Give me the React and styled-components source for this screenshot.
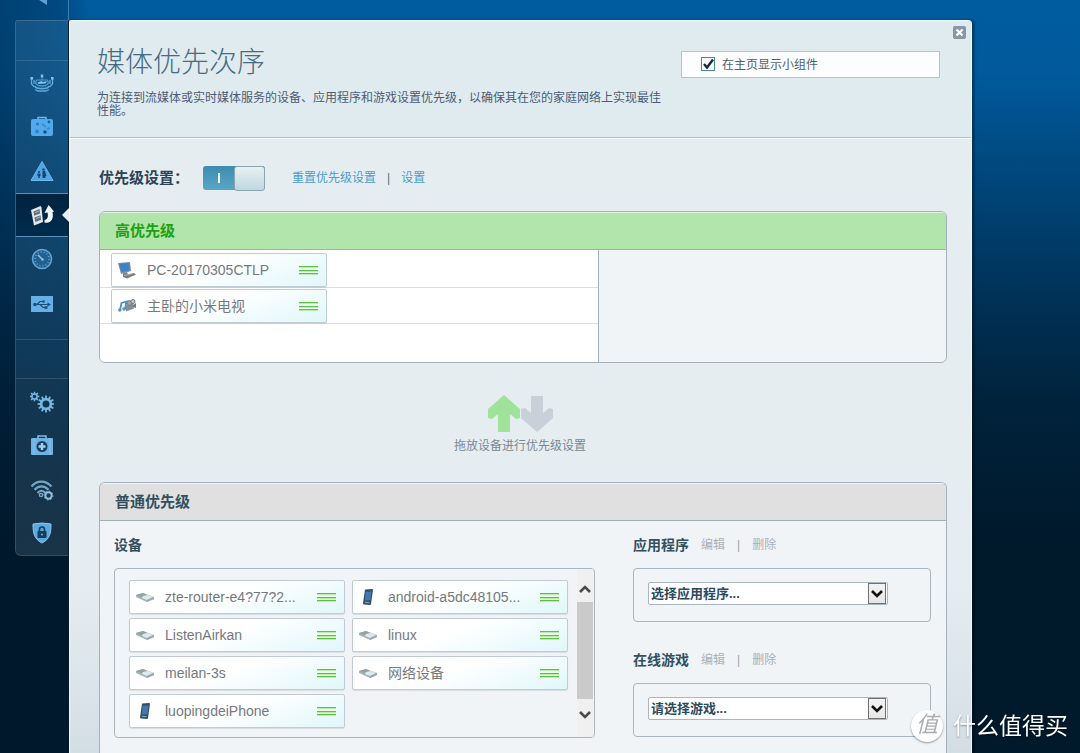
import React, { useState } from 'react';
import styled, { createGlobalStyle } from 'styled-components';

const GlobalStyle = createGlobalStyle`
    * {
        box-sizing: border-box;
    }

    body {
        margin: 0;
        background-color: #001a2c;
        color: #3f5566;
        font-family: "Liberation Sans", "Noto Sans CJK SC", sans-serif;
        font-size: 12px;
    }

    button, input, select {
        font-family: inherit;
    }
`;

const Page = styled.div`
    display: flex;
    min-height: 100vh;
    background: linear-gradient(to right, #00182e66 0, #00182e44 60px, transparent 90px),
        linear-gradient(#005c9f 0, #005a9c 70px, #00467a 180px, #003156 300px, #00233c 400px, #00192b 540px);
`;

const Rail = styled.nav`
    flex: 0 0 54px;
    margin-left: 15px;

    .rail_top {
        height: 20px;
        padding-left: 24px;
        border-right: 1px solid #3c7dae;
    }

    .rail_top svg {
        display: block;
    }
`;

const RailMenu = styled.div`
    border: 1px solid #ffffff22;
    border-right: 1px solid #001b31;
    border-radius: 3px 0 0 6px;
    background: linear-gradient(#4a86ad40, #3b7ba640 60%, #6b8ea03a);
`;

const RailSpace = styled.div`
    height: 40px;
    border-bottom: 1px solid #ffffff22;
    border-top: ${({ $line }) => ($line ? '1px solid #ffffff22' : 'none')};
    margin-top: ${({ $line }) => ($line ? '14px' : '0')};
`;

const RailButton = styled.button`
    display: flex;
    align-items: center;
    justify-content: center;
    position: relative;
    width: 100%;
    height: 44px;
    padding: 0;
    border: 0;
    border-top: 1px solid ${({ $active }) => ($active ? '#5e8fb2' : 'transparent')};
    border-bottom: 1px solid ${({ $active }) => ($active ? '#5e8fb2' : 'transparent')};
    background: ${({ $active }) => ($active ? 'linear-gradient(#00233f, #002c4c)' : 'none')};
    cursor: pointer;

    .pointer {
        position: absolute;
        right: -1px;
        top: 14px;
    }
`;

const Panel = styled.main`
    flex: 1;
    display: flex;
    flex-direction: column;
    margin: 20px 10% 0 0;
    border: 1px solid #eefafc;
    border-bottom: 0;
    border-radius: 2px 4px 0 0;
    background: linear-gradient(#e6edf1 0, #e6edf2 560px, #d3dee4 733px);
    box-shadow: 2px 0 3px #00000066;
`;

const Header = styled.header`
    position: relative;
    display: flex;
    justify-content: space-between;
    min-height: 117px;
    padding: 21px 31px 0 27px;
    border-bottom: 1px solid #b3c3cc;
    box-shadow: 0 1px #f8fbfc;
    background-color: #e0ebf0;

    h1 {
        margin: 0;
        color: #466b83;
        font-size: 28px;
        font-weight: 300;
        line-height: 42px;
    }

    p {
        max-width: 570px;
        margin: 8px 0 0;
        color: #4c5b76;
        line-height: 13px;
    }
`;

const CloseButton = styled.button`
    position: absolute;
    top: 5px;
    right: 5px;
    width: 13px;
    height: 13px;
    padding: 0;
    border: 0;
    background: none;
    cursor: pointer;

    svg {
        display: block;
    }
`;

const WidgetOption = styled.label`
    flex: 0 0 259px;
    display: flex;
    align-items: center;
    gap: 7px;
    height: 27px;
    margin-top: 9px;
    padding: 0 0 2px 19px;
    border: 1px solid #b6c3ce;
    background-color: #fbfdfe;
    color: #4f6070;
`;

const CheckBox = styled.span`
    display: grid;

    input, svg {
        grid-area: 1 / 1;
    }

    input {
        appearance: none;
        width: 14px;
        height: 14px;
        margin: 0;
        border: 1px solid #4b87a3;
        background-color: #fff;
    }

    svg {
        z-index: 1;
        pointer-events: none;
        visibility: hidden;
    }

    input:checked + svg {
        visibility: visible;
    }
`;

const Content = styled.div`
    flex: 1;
    display: flex;
    flex-direction: column;
    padding: 0 24px 0 29px;
`;

const SettingsBar = styled.div`
    display: flex;
    align-items: center;
    height: 73px;
    padding-top: 7px;

    h2 {
        width: 104px;
        margin: 0;
        color: #2c4356;
        font-size: 15px;
        line-height: 20px;
        white-space: nowrap;
    }
`;

const Toggle = styled.button`
    display: flex;
    flex-direction: ${({ $on }) => ($on ? 'row' : 'row-reverse')};
    width: 62px;
    height: 24px;
    margin-right: 27px;
    padding: 0;
    border: 0;
    border-radius: 3px;
    background: linear-gradient(#3d8cb0, #5ba6c6);
    cursor: pointer;

    .mark {
        flex: 1;
        align-self: center;
        display: flex;
        justify-content: center;
    }

    .mark::after {
        content: "";
        width: 2px;
        height: 10px;
        background-color: #eef8fc;
    }

    .knob {
        width: 31px;
        height: 25px;
        border: 1px solid #8fa5ad;
        border-radius: 3px;
        background: linear-gradient(#e7f1f3, #bfd7df);
    }
`;

const Links = styled.div`
    display: flex;
    gap: ${({ $muted }) => ($muted ? '12px' : '11px')};
    color: ${({ $muted }) => ($muted ? '#9aa3ab' : '#5b6f80')};
    line-height: 16px;

    a {
        color: ${({ $muted }) => ($muted ? '#a9b0b6' : '#4c9bcb')};
        text-decoration: none;
    }
`;

const Group = styled.section`
    border: 1px solid #a3b1bc;
    border-radius: 6px;
    background-color: #f0f4f7;
    overflow: hidden;

    ${({ $open }) => $open && `
        flex: 1;
        border-bottom: 0;
        border-radius: 6px 6px 0 0;
    `}
`;

const GroupTitle = styled.h2`
    height: 38px;
    margin: 0;
    padding-left: 15px;
    border-bottom: 1px solid #a3b0b3;
    box-shadow: inset 0 1px #ffffff99;
    background-color: ${({ $high }) => ($high ? '#b1e5ab' : '#e0e0e0')};
    color: ${({ $high }) => ($high ? '#21a011' : '#33505f')};
    font-size: 15px;
    line-height: 37px;
`;

const HighList = styled.ul`
    width: 59%;
    min-height: 112px;
    margin: 0;
    padding: 2px 0 0;
    border-right: 1px solid #a3b1bc;
    background-color: #fff;
    list-style: none;

    li {
        display: flex;
        align-items: center;
        height: 36px;
        padding-left: 11px;
        border-bottom: 1px solid #dcdfe3;
    }
`;

const Card = styled.div`
    display: flex;
    align-items: center;
    width: 216px;
    height: 34px;
    padding: 0 8px 0 6px;
    border: 1px solid #c0cbd4;
    border-radius: 2px;
    background: linear-gradient(160deg, #fff 45%, #e0f7fb);
    box-shadow: 0 1px 1px #00000018;
    color: #75797d;
    cursor: move;

    .device_icon {
        flex: 0 0 18px;
    }

    .device_name {
        flex: 1;
        margin-left: 11px;
        overflow: hidden;
        font-size: 14px;
        line-height: 20px;
        white-space: nowrap;
    }

    .handle {
        flex: 0 0 19px;
    }
`;

const DragHint = styled.div`
    display: flex;
    flex-direction: column;
    align-items: center;
    gap: 5px;
    padding: 32px 0 26px;
    margin-right: 6px;
    color: #7b8790;
    line-height: 19px;

    svg {
        display: block;
    }
`;

const Columns = styled.div`
    display: flex;
    justify-content: space-between;
    padding: 13px 15px 14px 14px;

    .device_column {
        flex: 0 0 481px;
    }

    .service_column {
        flex: 0 0 298px;
    }
`;

const BlockTitle = styled.div`
    display: flex;
    align-items: center;
    gap: 12px;
    height: 22px;
    margin-bottom: 12px;

    h3 {
        margin: 0;
        color: #33505f;
        font-size: 14px;
        line-height: 22px;
    }
`;

const Frame = styled.div`
    border: 1px solid #a9b5bf;
    border-radius: 4px;
`;

const DeviceFrame = styled(Frame)`
    display: flex;
    height: 170px;

    .device_grid {
        flex: 1;
        display: grid;
        grid-template-columns: 216px 216px;
        align-content: start;
        gap: 4px 7px;
        padding: 11px 0 0 14px;
    }
`;

const ScrollBar = styled.div`
    display: flex;
    flex-direction: column;
    width: 16px;
    margin-right: 1px;
    padding: 7px 0 6px;
    background-color: #f0f0f0;

    button {
        flex: 1;
        padding: 0;
        border: 0;
        background: none;
    }

    button:first-child {
        flex: 0 0 26px;
    }

    .thumb {
        flex: 0 0 97px;
        background-color: #cacaca;
    }

    svg {
        display: block;
        margin: 0 auto;
    }
`;

const SelectFrame = styled(Frame)`
    height: 54px;
    margin-bottom: 27px;
    padding: 13px 14px;
`;

const SelectBox = styled.div`
    display: grid;
    width: 240px;

    select, .arrow {
        grid-area: 1 / 1;
    }

    select {
        appearance: none;
        width: 100%;
        height: 23px;
        padding: 0 24px 0 2px;
        border: 1px solid #a9b5bf;
        border-radius: 2px;
        background-color: #fff;
        color: #2c4a5e;
        font-size: 13px;
        font-weight: bold;
    }

    .arrow {
        display: flex;
        align-items: center;
        justify-content: center;
        align-self: center;
        justify-self: end;
        z-index: 1;
        width: 18px;
        height: 21px;
        margin-right: 2px;
        border: 1px solid #707070;
        background: linear-gradient(#f3f3f3, #e6e6e6);
        pointer-events: none;
    }
`;

const Watermark = styled.div`
    position: fixed;
    right: 12px;
    bottom: 9px;
    display: flex;
    align-items: center;
    gap: 10px;
    color: #fff;
    font-size: 23px;
    line-height: 36px;
    text-shadow: 0 1px 2px #00000066;

    .badge {
        width: 32px;
        height: 32px;
        border-radius: 50%;
        background-color: #fff;
        box-shadow: 0 1px 2px #00000066;
        color: #a9adb0;
        font-size: 22px;
        font-style: italic;
        line-height: 30px;
        text-align: center;
        text-shadow: none;
    }
`;

const toothPath = (cx, cy, outer, inner, teeth) => {
    const points = [];
    for (let i = 0; i < teeth; i++) {
        [[-0.3, inner], [-0.18, outer], [0.18, outer], [0.3, inner]].forEach(([shift, r]) => {
            const angle = ((i + shift) / teeth) * Math.PI * 2;
            points.push(`${(cx + r * Math.cos(angle)).toFixed(2)} ${(cy + r * Math.sin(angle)).toFixed(2)}`);
        });
    }
    return `M${points.join('L')}Z`;
};

const railIcons = {
    map: (
        <g fill="none" stroke="#5fa9dc" strokeWidth="1.3">
            <path d="M1.500 8v5l3 3M22.500 8v5l-3 3M4 9v4M20 9v4" />
            <path d="M5 15c1 3.500 13 3.500 14 0" strokeWidth="1.600" />
            <path d="M7.500 8.500C3.500 12 7 15 12 15s8.500-3 4.500-6.500" opacity=".8" />
            <path d="M12 6v3M8 9h8" opacity=".6" />
            <path d="M7.500 11.500l4-1.500 1.500 1 4-1-1.500 2.500-7 .5z" fill="#7cc3f0" stroke="none" />
            <path d="M5 18.500l3 1.500h8l3-1.500" />
            <rect x=".5" y="6" width="2.600" height="2.600" fill="#7cc3f0" stroke="none" />
            <rect x="21" y="6" width="2.600" height="2.600" fill="#7cc3f0" stroke="none" />
            <rect x="10.800" y="3.500" width="2.400" height="3" fill="#7cc3f0" stroke="none" />
        </g>
    ),
    guest: (
        <g>
            <path d="M8 4V2.500h8V4" fill="none" stroke="#66b8f2" strokeWidth="1.500" />
            <rect x="1" y="4" width="22" height="17" rx="2" fill="#51aaee" />
            <circle cx="7.500" cy="9" r="1.600" fill="#2b79bb" />
            <circle cx="7" cy="16.500" r="2" fill="#3384c5" />
            <circle cx="15" cy="17" r="1.700" fill="#174d7d" />
            <circle cx="19" cy="7" r="1.400" fill="#1f6299" />
            <path d="M12 9l4 3M17 14l3-1" stroke="#3a8dce" strokeWidth="2" />
        </g>
    ),
    parental: (
        <g>
            <path d="M12 2.500L23 21.500H1z" fill="#51a5e4" stroke="#6bb8ee" strokeWidth="1" strokeLinejoin="round" />
            <circle cx="9" cy="13" r="1" fill="#124672" />
            <path d="M7.500 14.500h3v2.500h-.7v2H8.200v-2h-.7z" fill="#124672" />
            <circle cx="13.500" cy="10.500" r="1.200" fill="#124672" />
            <path d="M12.500 12h2.500l1.500 5h-1v2h-3z" fill="#124672" />
        </g>
    ),
    media: (
        <g>
            <path d="M1 7l9.500-4 1 1.500L13 19l-9 3.500z" fill="#e3e7ea" />
            <path d="M3.500 8.500l6-2.500.6 4.500-6 2.300zM4.500 14.500l6-2.300.6 4.500-5.800 2.300z" fill="#60717e" />
            <path d="M5 9.500l4-1.500M6 15.500l4-1.500" stroke="#a7b4bd" />
            <path d="M14.500 19.500c6 1.500 9.500-3 8-10.500L24 8.500 18.500 2l-4 8 3-.5c1 4.500 0 7-3 7.500z" fill="#f2f5f7" />
        </g>
    ),
    speed: (
        <g fill="none" stroke="#65a5d1">
            <circle cx="12" cy="12" r="9.500" fill="#24608f" strokeWidth="1.500" />
            <circle cx="12" cy="12" r="7" strokeWidth="1.600" strokeDasharray="1 2.140" />
            <path d="M8 8l4 4" stroke="#8bc4e9" strokeWidth="1.600" />
            <circle cx="12.500" cy="12.500" r="1.300" fill="#8bc4e9" stroke="none" />
        </g>
    ),
    usb: (
        <g>
            <rect x="1" y="5" width="22" height="16" fill="#67b0e6" />
            <path d="M4 13.500h14M7 13.500l3-3h3M10 13.500l3 3h3" fill="none" stroke="#194f7a" strokeWidth="1.200" />
            <circle cx="5" cy="13.500" r="1.800" fill="#194f7a" />
            <circle cx="13.500" cy="10.500" r="1.300" fill="#194f7a" />
            <path d="M14.500 15.300h3v2.400h-3zM17.500 11.500l3.500 2-3.500 2z" fill="#194f7a" />
        </g>
    ),
    gears: (
        <g fill="#78b6e2" fillRule="evenodd">
            <path d={toothPath(16, 15, 8.5, 6.2, 12) + 'M19.500 15a3.500 3.500 0 1 0-7 0a3.500 3.500 0 1 0 7 0Z'} />
            <path d={toothPath(4.5, 7.5, 4.9, 3.4, 8) + 'M6.300 7.500a1.800 1.800 0 1 0-3.600 0a1.800 1.800 0 1 0 3.600 0Z'} />
        </g>
    ),
    kit: (
        <g>
            <path d="M8 5V3h8v2" fill="none" stroke="#82bfe9" strokeWidth="1.500" />
            <rect x="1" y="5" width="22" height="17" rx="1" fill="#6eb2e4" />
            <path d="M4 5v17M20 5v17" stroke="#8cc6ee" strokeWidth=".8" />
            <circle cx="12" cy="13.500" r="5.500" fill="#173f60" />
            <path d="M12 10v7M8.500 13.500h7" stroke="#9fd2f4" strokeWidth="2.400" />
        </g>
    ),
    wifi: (
        <g fill="none" stroke="#75a6c8" strokeWidth="2.200">
            <path d="M1.500 9.500c5.500-6.500 14-6.500 20 0" />
            <path d="M4.500 12.800c4-4.700 10-4.700 14 0" />
            <path d="M7.500 16c2.500-3 5.500-3 8 0" strokeWidth="2" />
            <circle cx="11" cy="18" r="1.600" strokeWidth="1.400" />
            <circle cx="18.500" cy="18.500" r="3.200" stroke="#94bfdb" strokeWidth="2" />
            <circle cx="18.500" cy="18.500" r="4.500" stroke="#94bfdb" strokeWidth="1" strokeDasharray="1.500 2" />
        </g>
    ),
    shield: (
        <g>
            <path d="M3 3q9-2 18 0c0 9-1 15-9 19C4 18 3 12 3 3z" fill="#5aa9df" stroke="#8fc8ef" strokeWidth="1" />
            <rect x="7.500" y="10" width="9" height="7" rx="1" fill="#163c5b" />
            <path d="M9.500 11V8.500a2.500 2.500 0 0 1 5 0V11" fill="none" stroke="#163c5b" strokeWidth="1.600" />
            <circle cx="12" cy="13.500" r="1" fill="#6fb7e8" />
        </g>
    ),
};

const deviceIcons = {
    pc: (
        <g>
            <path d="M0 2l12-1 1 9-10 3z" fill="#788d9f" />
            <path d="M1 3l10-1 1 7-8.500 2z" fill="#3d82c6" />
            <path d="M5 12.500l4-1.500 1 2.500 6-1.500 2 1.500-9 4-4-1.500z" fill="#777d80" />
            <path d="M6 14.500l9-2" stroke="#b2b8ba" />
        </g>
    ),
    media: (
        <g>
            <path d="M2 13l1.500-7 5-1.500L7 12" fill="none" stroke="#4c93c4" strokeWidth="1.800" />
            <circle cx="1.800" cy="13" r="1.700" fill="#4c93c4" />
            <circle cx="6" cy="12" r="1.700" fill="#4c93c4" />
            <path d="M8 8.500l7-2 1 5-8 3z" fill="#858d94" />
            <circle cx="11.500" cy="6" r="2.400" fill="#a0a6ab" stroke="#737b82" />
            <circle cx="15" cy="4.500" r="2" fill="#c2c7ca" stroke="#737b82" />
            <path d="M15 8l3-2v5l-3-1z" fill="#737b82" />
        </g>
    ),
    router: (
        <g>
            <path d="M0 7l7-2 11 4v2l-7 3L0 9z" fill="#a7b2b5" />
            <path d="M0 7l7-2 4 2-6 2z" fill="#94a2a5" />
            <path d="M7 8l5-1 5 2-6 3-5-2z" fill="#dceaec" />
            <path d="M11 12l7-3v2l-7 3z" fill="#9ba9ac" />
        </g>
    ),
    phone: (
        <g>
            <path d="M6 1.500l7-.5q1 0 1 1l-2 14q0 1-1 1l-6-.5q-1 0-1-1z" fill="#34516c" />
            <path d="M6.500 4l6-.5-1 8.500-5.500.5z" fill="#3f79ad" />
            <path d="M6 14.300l4.500.4" stroke="#8faabc" />
        </g>
    ),
};

const Chevron = ({ down, size = 14, color = '#4b4b4b' }) => (
    <svg width={size} height={size - 4} viewBox="0 0 14 10" fill="none" stroke={color} strokeWidth="2.600">
        <path d={down ? 'M2 2l5 5 5-5' : 'M2 8l5-5 5 5'} />
    </svg>
);

const RailItem = ({ icon, label, active }) => (
    <RailButton $active={active} aria-label={label}>
        <svg width="24" height="24" viewBox="0 0 24 24">{railIcons[icon]}</svg>
        {active && (
            <svg className="pointer" width="7" height="14" viewBox="0 0 7 14">
                <path d="M7 0v14L0 7z" fill="#e6eef2" />
            </svg>
        )}
    </RailButton>
);

const DeviceCard = ({ type, name }) => (
    <Card draggable>
        <svg className="device_icon" width="18" height="18" viewBox="0 0 18 18">{deviceIcons[type]}</svg>
        <span className="device_name">{name}</span>
        <svg className="handle" width="19" height="10" viewBox="0 0 19 10">
            <path d="M0 2.500h19M0 6.500h19M0 9.500h19" stroke="#b9efa4" strokeWidth="1" />
            <path d="M0 1.500h19M0 5.500h19M0 8.500h19" stroke="#62bd45" strokeWidth="1" />
        </svg>
    </Card>
);

const ServiceBlock = ({ id, title, placeholder }) => (
    <>
        <BlockTitle>
            <h3>
                <label htmlFor={id}>{title}</label>
            </h3>
            <Links $muted>
                <a href="#edit">编辑</a>
                <span>|</span>
                <a href="#delete">删除</a>
            </Links>
        </BlockTitle>
        <SelectFrame>
            <SelectBox>
                <select id={id}>
                    <option>{placeholder}</option>
                </select>
                <span className="arrow">
                    <Chevron down color="#111" />
                </span>
            </SelectBox>
        </SelectFrame>
    </>
);

const highDevices = [
    { type: 'pc', name: 'PC-20170305CTLP' },
    { type: 'media', name: '主卧的小米电视' },
];

const normalDevices = [
    { type: 'router', name: 'zte-router-e4?77?2...' },
    { type: 'phone', name: 'android-a5dc48105...' },
    { type: 'router', name: 'ListenAirkan' },
    { type: 'router', name: 'linux' },
    { type: 'router', name: 'meilan-3s' },
    { type: 'router', name: '网络设备' },
    { type: 'phone', name: 'luopingdeiPhone' },
];

const App = () => {
    const [enabled, setEnabled] = useState(true);
    const [showWidget, setShowWidget] = useState(true);

    return (
        <Page>
            <GlobalStyle />
            <Rail>
                <div className="rail_top">
                    <svg width="8" height="5" viewBox="0 0 8 5">
                        <path d="M0 0h8v5z" fill="#5c9fd2" />
                    </svg>
                </div>
                <RailMenu>
                    <RailSpace />
                    <RailItem icon="map" label="网络映射" />
                    <RailItem icon="guest" label="访客访问" />
                    <RailItem icon="parental" label="家长控制" />
                    <RailItem icon="media" label="媒体优先次序" active />
                    <RailItem icon="speed" label="速度测试" />
                    <RailItem icon="usb" label="外部存储" />
                    <RailSpace $line />
                    <RailItem icon="gears" label="连接" />
                    <RailItem icon="kit" label="故障排除" />
                    <RailItem icon="wifi" label="无线" />
                    <RailItem icon="shield" label="安全" />
                </RailMenu>
            </Rail>

            <Panel>
                <Header>
                    <div>
                        <h1>媒体优先次序</h1>
                        <p>为连接到流媒体或实时媒体服务的设备、应用程序和游戏设置优先级，以确保其在您的家庭网络上实现最佳性能。</p>
                    </div>
                    <WidgetOption>
                        <CheckBox>
                            <input
                                type="checkbox"
                                checked={showWidget}
                                onChange={(e) => setShowWidget(e.target.checked)}
                            />
                            <svg width="14" height="14" viewBox="0 0 14 14">
                                <path d="M3 7l3 3.500L12 2.500" fill="none" stroke="#122c40" strokeWidth="2.400" />
                            </svg>
                        </CheckBox>
                        在主页显示小组件
                    </WidgetOption>
                    <CloseButton aria-label="关闭">
                        <svg width="13" height="13" viewBox="0 0 13 13">
                            <rect width="13" height="13" rx="2" fill="#8797a6" />
                            <path d="M3.500 3.500l6 6M9.500 3.500l-6 6" stroke="#fff" strokeWidth="2.400" />
                        </svg>
                    </CloseButton>
                </Header>

                <Content>
                    <SettingsBar>
                        <h2>优先级设置：</h2>
                        <Toggle
                            role="switch"
                            aria-checked={enabled}
                            aria-label="优先级设置"
                            $on={enabled}
                            onClick={() => setEnabled(!enabled)}
                        >
                            <span className="mark" />
                            <span className="knob" />
                        </Toggle>
                        <Links>
                            <a href="#reset">重置优先级设置</a>
                            <span>|</span>
                            <a href="#settings">设置</a>
                        </Links>
                    </SettingsBar>

                    <Group>
                        <GroupTitle $high>高优先级</GroupTitle>
                        <HighList>
                            {highDevices.map((it) => (
                                <li key={it.name}>
                                    <DeviceCard {...it} />
                                </li>
                            ))}
                        </HighList>
                    </Group>

                    <DragHint>
                        <svg width="65" height="37" viewBox="0 0 65 37">
                            <path d="M16 0L32 14v9l-4 1-6-5v18H10V19l-6 5-4-1v-9z" fill="#9fe39b" />
                            <path d="M49 37L33 23v-9l4-1 6 5V1h12v17l6-5 4 1v9z" fill="#c8d0d9" />
                        </svg>
                        拖放设备进行优先级设置
                    </DragHint>

                    <Group $open>
                        <GroupTitle>普通优先级</GroupTitle>
                        <Columns>
                            <div className="device_column">
                                <BlockTitle>
                                    <h3>设备</h3>
                                </BlockTitle>
                                <DeviceFrame>
                                    <div className="device_grid">
                                        {normalDevices.map((it) => (
                                            <DeviceCard key={it.name} {...it} />
                                        ))}
                                    </div>
                                    <ScrollBar>
                                        <button aria-label="向上滚动">
                                            <Chevron />
                                        </button>
                                        <div className="thumb" />
                                        <button aria-label="向下滚动">
                                            <Chevron down />
                                        </button>
                                    </ScrollBar>
                                </DeviceFrame>
                            </div>
                            <div className="service_column">
                                <ServiceBlock id="app" title="应用程序" placeholder="选择应用程序..." />
                                <ServiceBlock id="game" title="在线游戏" placeholder="请选择游戏..." />
                            </div>
                        </Columns>
                    </Group>
                </Content>
            </Panel>

            <Watermark>
                <span className="badge">值</span>
                什么值得买
            </Watermark>
        </Page>
    );
};

export default App;
